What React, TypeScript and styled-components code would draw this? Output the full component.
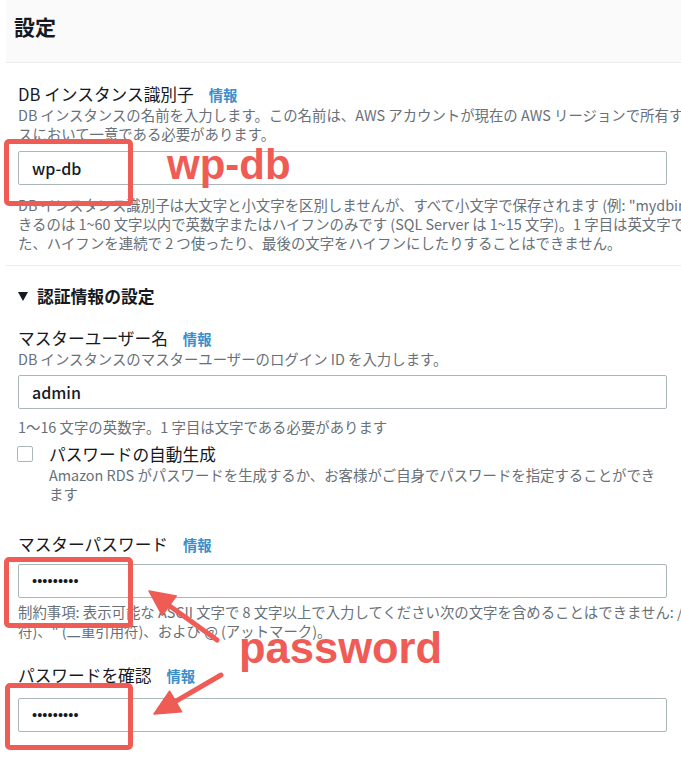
import React from "react";
import styled, { createGlobalStyle } from "styled-components";

const GlobalStyle = createGlobalStyle`
  html, body {
    margin: 0;
    padding: 0;
    background: #ffffff;
  }
  body {
    font-family: "Noto Sans CJK JP", "Noto Sans", sans-serif;
    color: #16191f;
    overflow: hidden;
  }
`;

const RED = "#ee5c55";

const Page = styled.div`
  position: relative;
  width: 681px;
  height: 761px;
  overflow: hidden;
  background: #fff;
`;

const Header = styled.div`
  margin-left: 6px;
  height: 63px;
  background: #fafafa;
  border-bottom: 1px solid #eaeded;
  padding: 11px 0 0 8px;
  box-sizing: border-box;
`;

const Title = styled.h2`
  margin: 0;
  font-size: 21px;
  line-height: 30px;
  font-weight: 700;
  color: #16191f;
`;

const Body = styled.div`
  padding-left: 18px;
  width: 649px;
`;

const Field = styled.div<{ $mt: number }>`
  margin-top: ${(p) => p.$mt}px;
`;

const LabelRow = styled.div`
  display: flex;
  align-items: baseline;
  gap: 15px;
  height: 22px;
  overflow: visible;
  white-space: nowrap;
`;

const Label = styled.label`
  display: block;
  font-size: 16.7px;
  line-height: 22px;
  color: #16191f;
  white-space: nowrap;
`;

const Info = styled.a`
  font-size: 14.3px;
  line-height: 22px;
  color: #3a8fcb;
  font-weight: 700;
  text-decoration: none;
`;

const Desc = styled.div<{ $mt?: number }>`
  margin-top: ${(p) => p.$mt ?? 0}px;
  font-size: 14.4px;
  line-height: 19px;
  color: #687078;
  white-space: nowrap;
`;

const Line = styled.div``;

const TextInput = styled.input<{ $mt: number }>`
  display: block;
  margin-top: ${(p) => p.$mt}px;
  width: 649px;
  height: 34px;
  box-sizing: border-box;
  border: 1px solid #aab7b8;
  border-radius: 2px;
  padding: 0 13px;
  font-family: "Noto Sans CJK JP", "Noto Sans", sans-serif;
  font-size: 16px;
  font-weight: 500;
  color: #16191f;
  background: #fff;
  outline: none;
`;

const PasswordInput = styled(TextInput)`
  font-family: "Liberation Sans", Arial, sans-serif;
  font-size: 14.5px;
  font-weight: 400;
  letter-spacing: 0.1px;
`;

const Divider = styled.hr<{ $mt: number }>`
  margin: ${(p) => p.$mt}px 0 0 6px;
  border: none;
  border-top: 1px solid #eaeded;
  height: 0;
`;

const SectionHeader = styled.div<{ $mt: number }>`
  margin-top: ${(p) => p.$mt}px;
  display: flex;
  align-items: center;
  gap: 9px;
  height: 22px;
  font-size: 16.8px;
  line-height: 22px;
  font-weight: 700;
  color: #16191f;
`;

const Caret = styled.span`
  display: inline-block;
  width: 0;
  height: 0;
  border-left: 5.5px solid transparent;
  border-right: 5.5px solid transparent;
  border-top: 9px solid #16191f;
`;

const CheckRow = styled.div<{ $mt: number }>`
  margin-top: ${(p) => p.$mt}px;
  display: flex;
  align-items: flex-start;
  gap: 16px;
  margin-left: -1px;
`;

const CheckBox = styled.span`
  flex: none;
  width: 16px;
  height: 16px;
  margin-top: 3px;
  box-sizing: border-box;
  border: 1px solid #aab7b8;
  border-radius: 2px;
  background: #fff;
`;

const CheckText = styled.div`
  display: flex;
  flex-direction: column;
`;

const Highlight = styled.div<{ $x: number; $y: number; $w: number; $h: number }>`
  position: absolute;
  left: ${(p) => p.$x}px;
  top: ${(p) => p.$y}px;
  width: ${(p) => p.$w}px;
  height: ${(p) => p.$h}px;
  box-sizing: border-box;
  border: 5px solid ${RED};
  border-radius: 5px;
  pointer-events: none;
`;

const Note = styled.div<{ $x: number; $y: number; $size: number }>`
  position: absolute;
  left: ${(p) => p.$x}px;
  top: ${(p) => p.$y}px;
  font-family: "Liberation Sans", Arial, sans-serif;
  font-weight: 700;
  font-size: ${(p) => p.$size}px;
  line-height: 1;
  color: ${RED};
  white-space: nowrap;
  pointer-events: none;
`;

const ArrowLayer = styled.svg`
  position: absolute;
  left: 0;
  top: 0;
  pointer-events: none;
`;

type Pt = [number, number];

function Arrow({ from, to }: { from: Pt; to: Pt }) {
  const dx = to[0] - from[0];
  const dy = to[1] - from[1];
  const len = Math.hypot(dx, dy);
  const ux = dx / len;
  const uy = dy / len;
  const head = 25;
  const half = 12;
  const bx = to[0] - ux * head;
  const by = to[1] - uy * head;
  const px = -uy * half;
  const py = ux * half;
  const pts = `${to[0]},${to[1]} ${bx + px},${by + py} ${bx - px},${by - py}`;
  return (
    <g>
      <line
        x1={from[0]}
        y1={from[1]}
        x2={bx + ux * 2}
        y2={by + uy * 2}
        stroke={RED}
        strokeWidth={5}
        strokeLinecap="round"
      />
      <polygon points={pts} fill={RED} stroke={RED} strokeWidth={1.5} strokeLinejoin="round" />
    </g>
  );
}

export default function App() {
  return (
    <>
      <GlobalStyle />
      <Page>
        <Header>
          <Title>設定</Title>
        </Header>

        <Body>
          <Field $mt={20}>
            <LabelRow>
              <Label>DB インスタンス識別子</Label>
              <Info>情報</Info>
            </LabelRow>
            <Desc>
              <Line>
                DB インスタンスの名前を入力します。この名前は、AWS アカウントが現在の AWS リージョンで所有するすべての DB インスタン
              </Line>
              <Line>スにおいて一意である必要があります。</Line>
            </Desc>
            <TextInput $mt={8} type="text" defaultValue="wp-db" readOnly />
            <Desc $mt={10}>
              <Line>
                DB インスタンス識別子は大文字と小文字を区別しませんが、すべて小文字で保存されます (例: "mydbinstance")。制約: 指定で
              </Line>
              <Line>
                きるのは 1~60 文字以内で英数字またはハイフンのみです (SQL Server は 1~15 文字)。1 字目は英文字である必要があります。ま
              </Line>
              <Line>た、ハイフンを連続で 2 つ使ったり、最後の文字をハイフンにしたりすることはできません。</Line>
            </Desc>
          </Field>
        </Body>

        <Divider $mt={13} />

        <Body>
          <SectionHeader $mt={19}>
            <Caret />
            <span>認証情報の設定</span>
          </SectionHeader>

          <Field $mt={20}>
            <LabelRow>
              <Label>マスターユーザー名</Label>
              <Info>情報</Info>
            </LabelRow>
            <Desc>
              <Line>DB インスタンスのマスターユーザーのログイン ID を入力します。</Line>
            </Desc>
            <TextInput $mt={7} type="text" defaultValue="admin" readOnly />
            <Desc $mt={8}>
              <Line>1〜16 文字の英数字。1 字目は文字である必要があります</Line>
            </Desc>
          </Field>

          <CheckRow $mt={7}>
            <CheckBox />
            <CheckText>
              <Label>パスワードの自動生成</Label>
              <Desc>
                <Line>Amazon RDS がパスワードを生成するか、お客様がご自身でパスワードを指定することができ</Line>
                <Line>ます</Line>
              </Desc>
            </CheckText>
          </CheckRow>

          <Field $mt={30}>
            <LabelRow>
              <Label>マスターパスワード</Label>
              <Info>情報</Info>
            </LabelRow>
            <PasswordInput $mt={9} type="password" defaultValue="password1" readOnly />
            <Desc $mt={4}>
              <Line>
                制約事項: 表示可能な ASCII 文字で 8 文字以上で入力してください次の文字を含めることはできません: / (スラッシュ)、' (一重引用
              </Line>
              <Line>符)、" (二重引用符)、および @ (アットマーク)。</Line>
            </Desc>
          </Field>

          <Field $mt={24}>
            <LabelRow>
              <Label>パスワードを確認</Label>
              <Info>情報</Info>
            </LabelRow>
            <PasswordInput $mt={12} type="password" defaultValue="password1" readOnly />
          </Field>
        </Body>

        <Highlight $x={4} $y={139} $w={129} $h={67} />
        <Highlight $x={4} $y={557} $w={129} $h={71} />
        <Highlight $x={5} $y={683} $w={128} $h={67} />

        <Note $x={167} $y={144} $size={42}>wp-db</Note>
        <Note $x={239} $y={627} $size={43.5}>password</Note>

        <ArrowLayer width={681} height={761} viewBox="0 0 681 761">
          <Arrow from={[217, 640]} to={[149, 591]} />
          <Arrow from={[221, 675]} to={[154, 714]} />
        </ArrowLayer>
      </Page>
    </>
  );
}
